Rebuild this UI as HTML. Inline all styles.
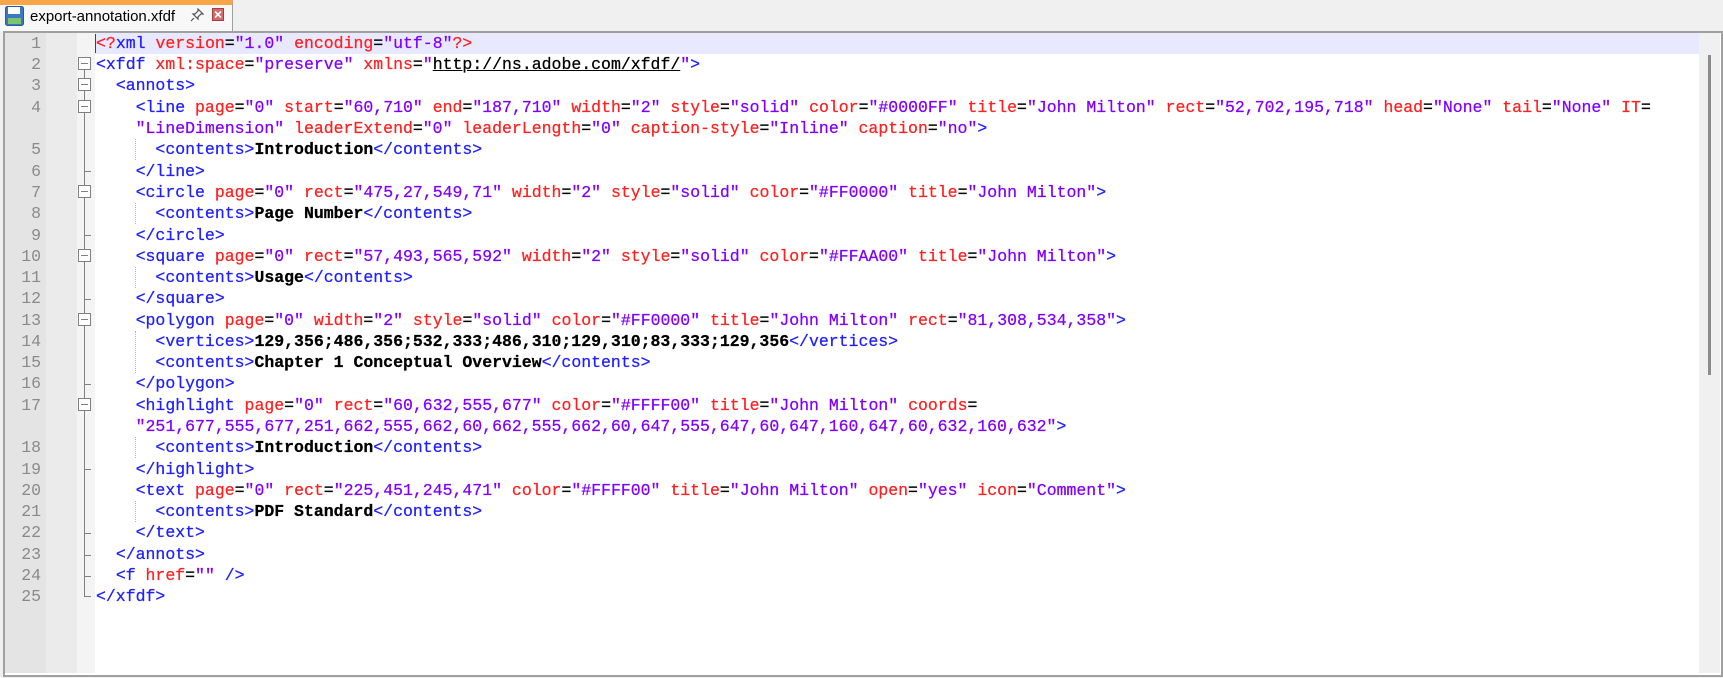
<!DOCTYPE html>
<html><head><meta charset="utf-8"><style>
*{margin:0;padding:0;box-sizing:border-box}
body{width:1723px;height:678px;background:#f0f0f0;position:relative;overflow:hidden;font-family:"Liberation Mono",monospace}
.tab{position:absolute;left:0;top:0;width:233px;height:31px;background:#f8f8f8;border-right:1px solid #a0a0a0;border-top:5px solid #f8a64a}
.tab .name{position:absolute;left:30px;top:3px;font:15px "Liberation Sans",sans-serif;color:#000}
.frame{position:absolute;left:3px;top:31px;width:1720px;height:646px;border:2px solid #a0a0a0;background:#fff}
.ln{position:absolute;left:5px;top:33px;width:41px;height:640px;background:#e4e4e4}
.mg{position:absolute;left:46px;top:33px;width:31px;height:640px;background:#ebebeb}
.fm{position:absolute;left:77px;top:33px;width:18px;height:640px;background:#f4f4f4}
.sb{position:absolute;left:1699px;top:33px;width:21px;height:640px;background:#f0f0f0}
.thumb{position:absolute;left:1708px;top:55px;width:3px;height:320px;background:#8c8c8c}
.hl{position:absolute;left:95px;top:33px;width:1604px;height:21px;background:#e8e8ff}
.caret{position:absolute;left:95px;top:34px;width:1px;height:19px;background:#8000ff}
.r{position:absolute;left:96px;height:21px;line-height:21px;font-size:16.5px;white-space:pre;color:#000;-webkit-text-stroke:0.25px currentColor}
.n{position:absolute;left:5px;width:36px;text-align:right;height:21px;line-height:21px;font-size:16.5px;color:#8a8a8a}
.t{color:#2020ff}.a{color:#ff2020}.v{color:#8000ff}.c{font-weight:bold}
.u{color:#000;text-decoration:underline}
.box{position:absolute;left:78px;width:13px;height:13px;border:1px solid #808080;background:#fff}
.box:after{content:"";position:absolute;left:2px;top:5px;width:7px;height:1px;background:#808080}
.vl{position:absolute;left:84px;width:1px;background:#808080}
.tk{position:absolute;left:84px;width:7px;height:1px;background:#808080}
.ig{position:absolute;left:135px;width:0;border-left:1px dotted #b0b0b0;height:21px}
</style></head><body>
<div class="tab">
<svg style="position:absolute;left:5px;top:1px" width="19" height="20" viewBox="0 0 19 20"><rect x="0.5" y="0.5" width="18" height="19" rx="2" fill="#3b78c4" stroke="#2a5a9a"/><rect x="3" y="1" width="12" height="7" fill="#fff"/><rect x="3" y="12" width="13" height="6" fill="#7cc46a"/></svg>
<div class="name">export-annotation.xfdf</div>
<svg style="position:absolute;left:190px;top:3px" width="14" height="14" viewBox="0 0 14 14"><path d="M8 1l5 5-2 0-3 3 0 2-5-5 2 0 3-3z M4 10l-3 3" fill="none" stroke="#555" stroke-width="1.2"/></svg>
<svg style="position:absolute;left:212px;top:3px" width="12" height="13" viewBox="0 0 12 13"><rect x="0.5" y="0.5" width="11" height="12" fill="#d26a6a" stroke="#a04040"/><path d="M3 3.5l6 6M9 3.5l-6 6" stroke="#fff" stroke-width="1.6"/></svg>
</div>
<div class="frame"></div>
<div class="ln"></div><div class="mg"></div><div class="fm"></div><div class="sb"></div><div class="thumb"></div>
<div class="hl"></div><div class="caret"></div>

<div class="vl" style="top:70px;height:527px"></div>
<div class="tk" style="top:596px"></div>
<div class="tk" style="top:171px"></div><div class="tk" style="top:235px"></div><div class="tk" style="top:299px"></div><div class="tk" style="top:384px"></div><div class="tk" style="top:469px"></div><div class="tk" style="top:533px"></div><div class="tk" style="top:555px"></div><div class="tk" style="top:576px"></div>
<div class="box" style="top:57px"></div><div class="box" style="top:78px"></div><div class="box" style="top:100px"></div><div class="box" style="top:185px"></div><div class="box" style="top:249px"></div><div class="box" style="top:313px"></div><div class="box" style="top:398px"></div>

<div class="ig" style="top:139px"></div><div class="ig" style="top:203px"></div><div class="ig" style="top:267px"></div><div class="ig" style="top:331px;height:42px"></div><div class="ig" style="top:437px"></div><div class="ig" style="top:501px"></div>

<div class="n" style="top:33px">1</div>
<div class="n" style="top:54px">2</div>
<div class="n" style="top:75px">3</div>
<div class="n" style="top:97px">4</div>
<div class="n" style="top:139px">5</div>
<div class="n" style="top:161px">6</div>
<div class="n" style="top:182px">7</div>
<div class="n" style="top:203px">8</div>
<div class="n" style="top:225px">9</div>
<div class="n" style="top:246px">10</div>
<div class="n" style="top:267px">11</div>
<div class="n" style="top:288px">12</div>
<div class="n" style="top:310px">13</div>
<div class="n" style="top:331px">14</div>
<div class="n" style="top:352px">15</div>
<div class="n" style="top:373px">16</div>
<div class="n" style="top:395px">17</div>
<div class="n" style="top:437px">18</div>
<div class="n" style="top:459px">19</div>
<div class="n" style="top:480px">20</div>
<div class="n" style="top:501px">21</div>
<div class="n" style="top:522px">22</div>
<div class="n" style="top:544px">23</div>
<div class="n" style="top:565px">24</div>
<div class="n" style="top:586px">25</div>

<div class="r" style="top:33px"><span class="a">&lt;?</span><span class="t">xml</span> <span class="a">version</span>=<span class="v">"1.0"</span> <span class="a">encoding</span>=<span class="v">"utf-8"</span><span class="a">?&gt;</span></div>
<div class="r" style="top:54px"><span class="t">&lt;xfdf</span> <span class="a">xml:space</span>=<span class="v">"preserve"</span> <span class="a">xmlns</span>=<span class="v">"</span><span class="u">http://ns.adobe.com/xfdf/</span><span class="v">"</span><span class="t">&gt;</span></div>
<div class="r" style="top:75px">  <span class="t">&lt;annots&gt;</span></div>
<div class="r" style="top:97px">    <span class="t">&lt;line</span> <span class="a">page</span>=<span class="v">"0"</span> <span class="a">start</span>=<span class="v">"60,710"</span> <span class="a">end</span>=<span class="v">"187,710"</span> <span class="a">width</span>=<span class="v">"2"</span> <span class="a">style</span>=<span class="v">"solid"</span> <span class="a">color</span>=<span class="v">"#0000FF"</span> <span class="a">title</span>=<span class="v">"John Milton"</span> <span class="a">rect</span>=<span class="v">"52,702,195,718"</span> <span class="a">head</span>=<span class="v">"None"</span> <span class="a">tail</span>=<span class="v">"None"</span> <span class="a">IT</span>=</div>
<div class="r" style="top:118px">    <span class="v">"LineDimension"</span> <span class="a">leaderExtend</span>=<span class="v">"0"</span> <span class="a">leaderLength</span>=<span class="v">"0"</span> <span class="a">caption-style</span>=<span class="v">"Inline"</span> <span class="a">caption</span>=<span class="v">"no"</span><span class="t">&gt;</span></div>
<div class="r" style="top:139px">      <span class="t">&lt;contents&gt;</span><span class="c">Introduction</span><span class="t">&lt;/contents&gt;</span></div>
<div class="r" style="top:161px">    <span class="t">&lt;/line&gt;</span></div>
<div class="r" style="top:182px">    <span class="t">&lt;circle</span> <span class="a">page</span>=<span class="v">"0"</span> <span class="a">rect</span>=<span class="v">"475,27,549,71"</span> <span class="a">width</span>=<span class="v">"2"</span> <span class="a">style</span>=<span class="v">"solid"</span> <span class="a">color</span>=<span class="v">"#FF0000"</span> <span class="a">title</span>=<span class="v">"John Milton"</span><span class="t">&gt;</span></div>
<div class="r" style="top:203px">      <span class="t">&lt;contents&gt;</span><span class="c">Page Number</span><span class="t">&lt;/contents&gt;</span></div>
<div class="r" style="top:225px">    <span class="t">&lt;/circle&gt;</span></div>
<div class="r" style="top:246px">    <span class="t">&lt;square</span> <span class="a">page</span>=<span class="v">"0"</span> <span class="a">rect</span>=<span class="v">"57,493,565,592"</span> <span class="a">width</span>=<span class="v">"2"</span> <span class="a">style</span>=<span class="v">"solid"</span> <span class="a">color</span>=<span class="v">"#FFAA00"</span> <span class="a">title</span>=<span class="v">"John Milton"</span><span class="t">&gt;</span></div>
<div class="r" style="top:267px">      <span class="t">&lt;contents&gt;</span><span class="c">Usage</span><span class="t">&lt;/contents&gt;</span></div>
<div class="r" style="top:288px">    <span class="t">&lt;/square&gt;</span></div>
<div class="r" style="top:310px">    <span class="t">&lt;polygon</span> <span class="a">page</span>=<span class="v">"0"</span> <span class="a">width</span>=<span class="v">"2"</span> <span class="a">style</span>=<span class="v">"solid"</span> <span class="a">color</span>=<span class="v">"#FF0000"</span> <span class="a">title</span>=<span class="v">"John Milton"</span> <span class="a">rect</span>=<span class="v">"81,308,534,358"</span><span class="t">&gt;</span></div>
<div class="r" style="top:331px">      <span class="t">&lt;vertices&gt;</span><span class="c">129,356;486,356;532,333;486,310;129,310;83,333;129,356</span><span class="t">&lt;/vertices&gt;</span></div>
<div class="r" style="top:352px">      <span class="t">&lt;contents&gt;</span><span class="c">Chapter 1 Conceptual Overview</span><span class="t">&lt;/contents&gt;</span></div>
<div class="r" style="top:373px">    <span class="t">&lt;/polygon&gt;</span></div>
<div class="r" style="top:395px">    <span class="t">&lt;highlight</span> <span class="a">page</span>=<span class="v">"0"</span> <span class="a">rect</span>=<span class="v">"60,632,555,677"</span> <span class="a">color</span>=<span class="v">"#FFFF00"</span> <span class="a">title</span>=<span class="v">"John Milton"</span> <span class="a">coords</span>=</div>
<div class="r" style="top:416px">    <span class="v">"251,677,555,677,251,662,555,662,60,662,555,662,60,647,555,647,60,647,160,647,60,632,160,632"</span><span class="t">&gt;</span></div>
<div class="r" style="top:437px">      <span class="t">&lt;contents&gt;</span><span class="c">Introduction</span><span class="t">&lt;/contents&gt;</span></div>
<div class="r" style="top:459px">    <span class="t">&lt;/highlight&gt;</span></div>
<div class="r" style="top:480px">    <span class="t">&lt;text</span> <span class="a">page</span>=<span class="v">"0"</span> <span class="a">rect</span>=<span class="v">"225,451,245,471"</span> <span class="a">color</span>=<span class="v">"#FFFF00"</span> <span class="a">title</span>=<span class="v">"John Milton"</span> <span class="a">open</span>=<span class="v">"yes"</span> <span class="a">icon</span>=<span class="v">"Comment"</span><span class="t">&gt;</span></div>
<div class="r" style="top:501px">      <span class="t">&lt;contents&gt;</span><span class="c">PDF Standard</span><span class="t">&lt;/contents&gt;</span></div>
<div class="r" style="top:522px">    <span class="t">&lt;/text&gt;</span></div>
<div class="r" style="top:544px">  <span class="t">&lt;/annots&gt;</span></div>
<div class="r" style="top:565px">  <span class="t">&lt;f</span> <span class="a">href</span>=<span class="v">""</span> <span class="t">/&gt;</span></div>
<div class="r" style="top:586px"><span class="t">&lt;/xfdf&gt;</span></div>
</body></html>
